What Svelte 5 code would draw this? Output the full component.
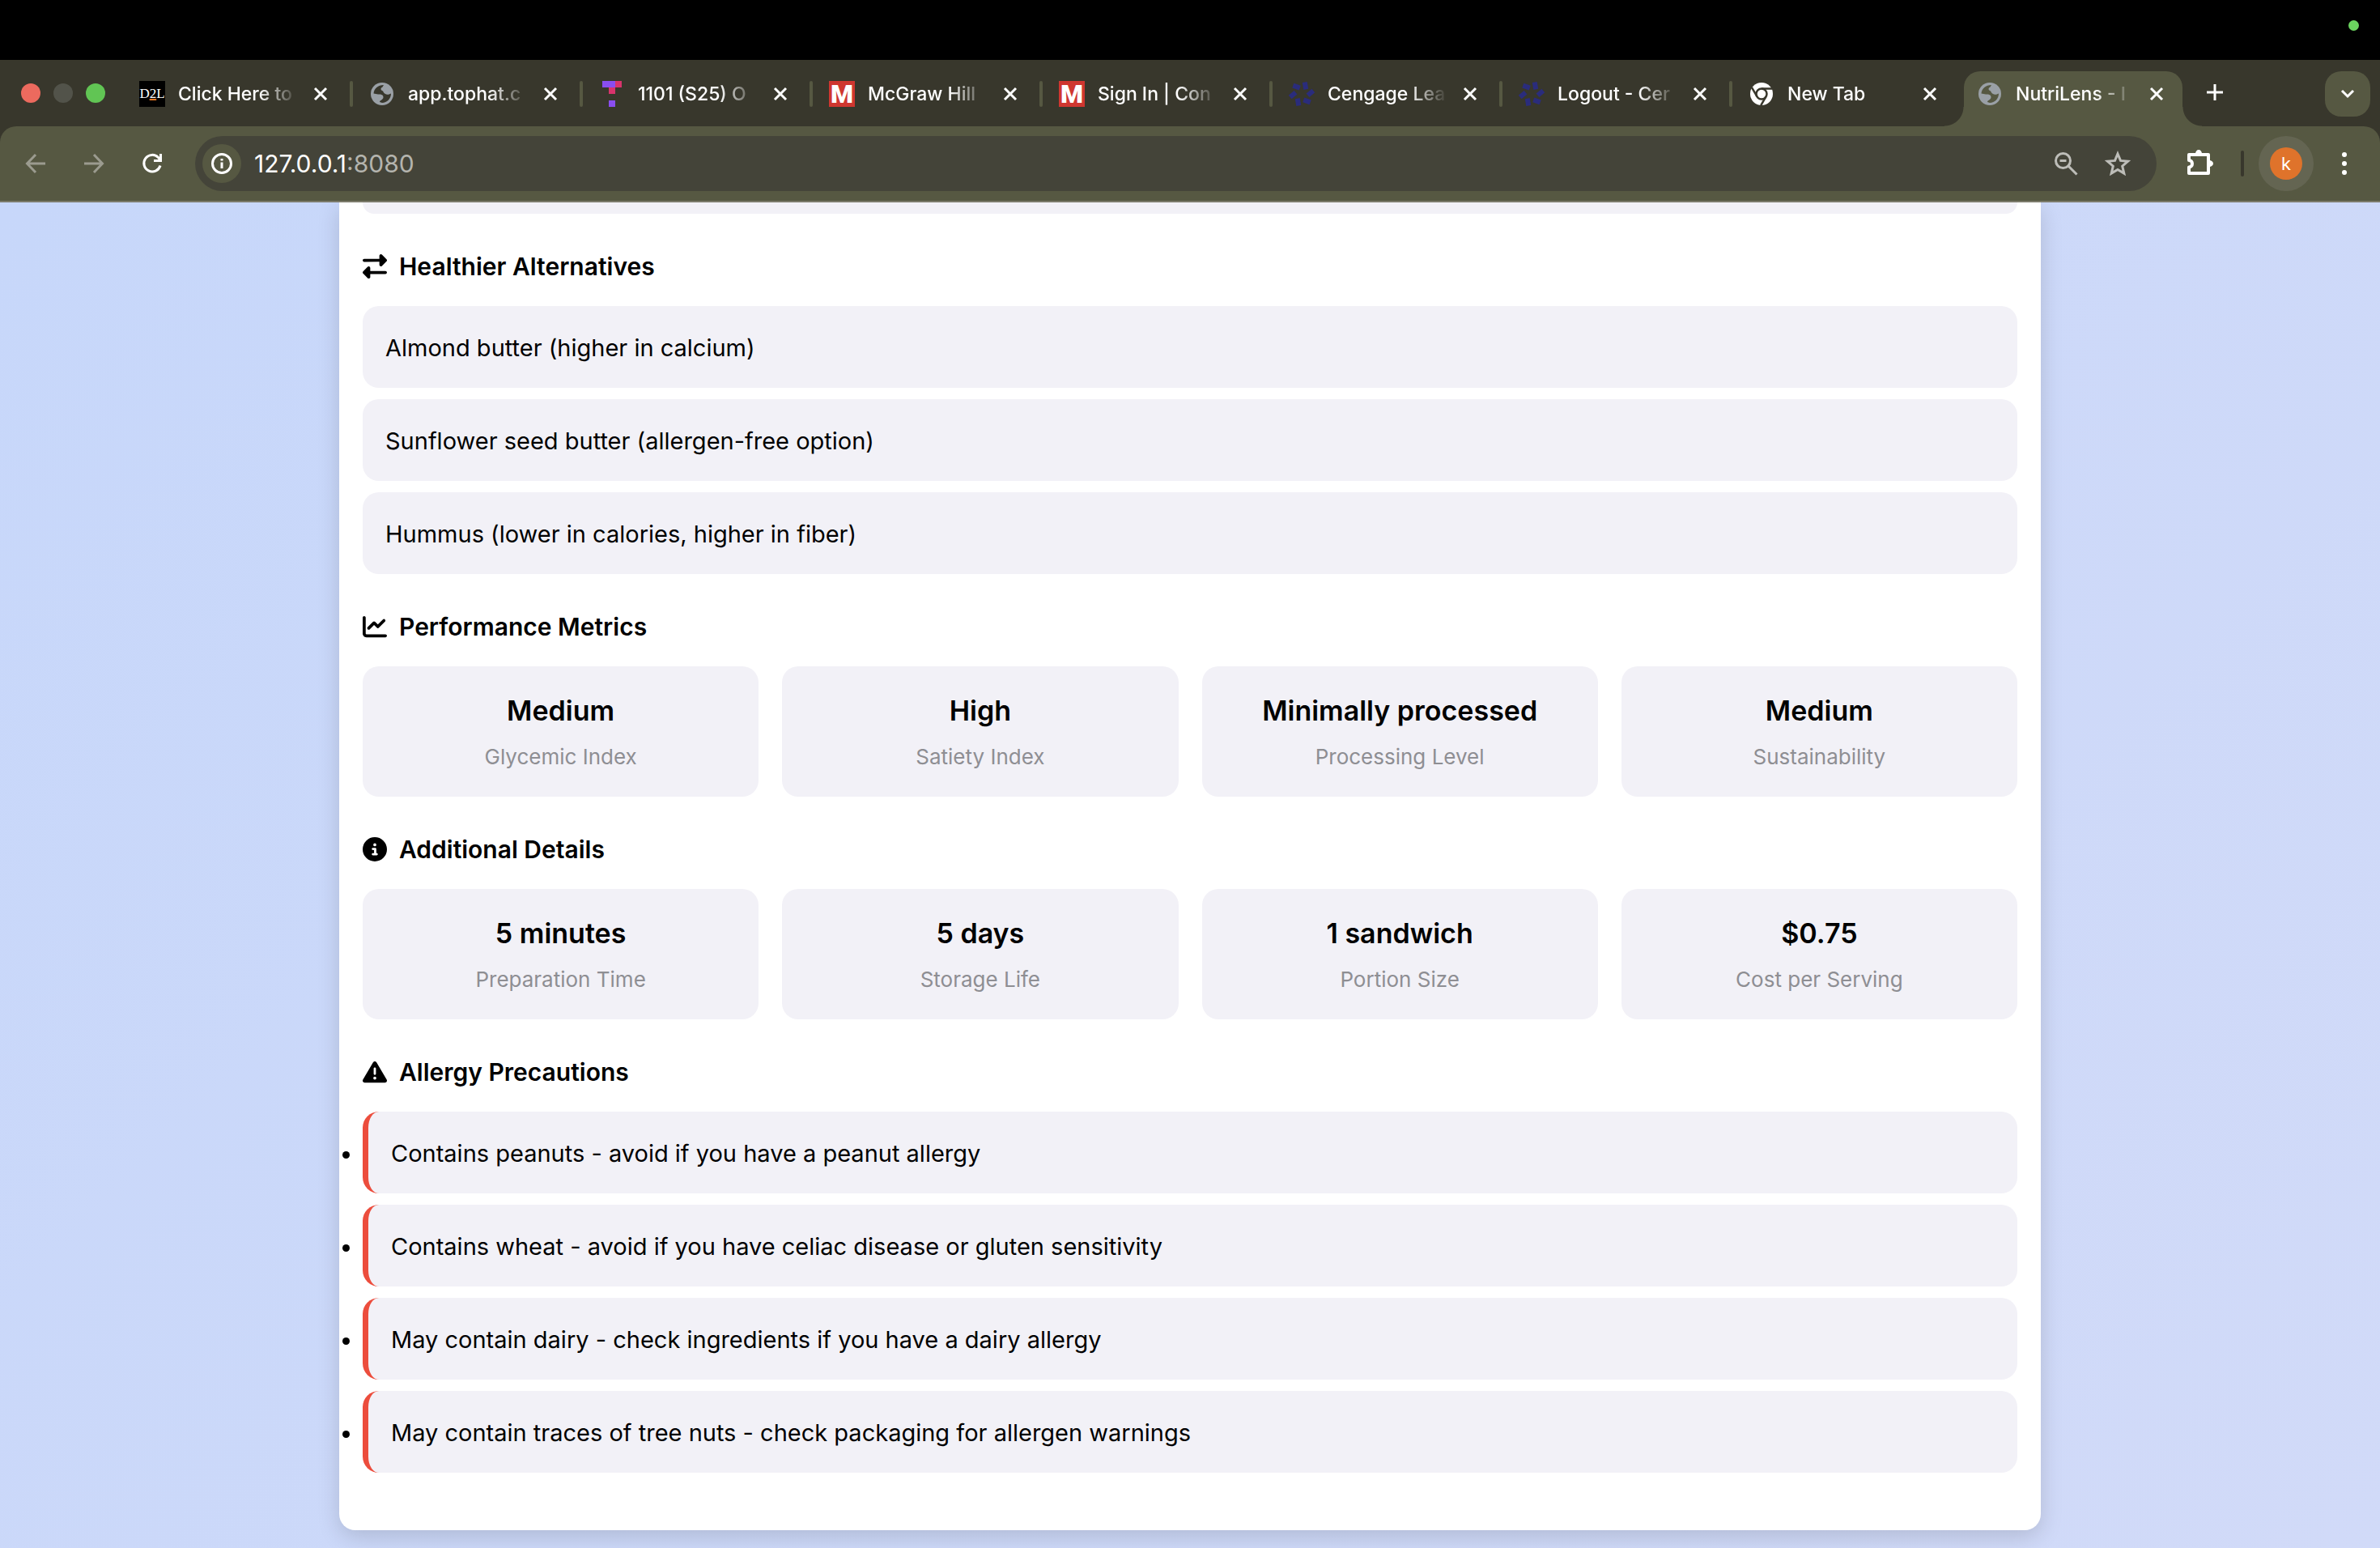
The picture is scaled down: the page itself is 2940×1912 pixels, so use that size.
<script>
  const tabs = [
    { title: 'Click Here to', icon: 'd2l' },
    { title: 'app.tophat.c', icon: 'globe' },
    { title: '1101 (S25) O', icon: 'tophat' },
    { title: 'McGraw Hill', icon: 'mh' },
    { title: 'Sign In | Con', icon: 'mh' },
    { title: 'Cengage Lea', icon: 'cengage' },
    { title: 'Logout - Cer', icon: 'cengage' },
    { title: 'New Tab', icon: 'chrome' },
    { title: 'NutriLens - I', icon: 'globe', active: true }
  ];
  const alternatives = [
    'Almond butter (higher in calcium)',
    'Sunflower seed butter (allergen-free option)',
    'Hummus (lower in calories, higher in fiber)'
  ];
  const metrics = [
    ['Medium', 'Glycemic Index'],
    ['High', 'Satiety Index'],
    ['Minimally processed', 'Processing Level'],
    ['Medium', 'Sustainability']
  ];
  const details = [
    ['5 minutes', 'Preparation Time'],
    ['5 days', 'Storage Life'],
    ['1 sandwich', 'Portion Size'],
    ['$0.75', 'Cost per Serving']
  ];
  const precautions = [
    'Contains peanuts - avoid if you have a peanut allergy',
    'Contains wheat - avoid if you have celiac disease or gluten sensitivity',
    'May contain dairy - check ingredients if you have a dairy allergy',
    'May contain traces of tree nuts - check packaging for allergen warnings'
  ];
  let url = $state('127.0.0.1:8080');
  const host = $derived(url.split(':')[0]);
  const port = $derived(url.includes(':') ? ':' + url.split(':')[1] : '');
</script>

{#snippet favicon(kind)}
  {#if kind === 'd2l'}
    <span class="fav d2l">D<u>2</u>L</span>
  {:else if kind === 'mh'}
    <span class="fav mh">M</span>
  {:else if kind === 'globe'}
    <svg class="fav" viewBox="0 0 32 32" aria-hidden="true">
      <circle cx="16" cy="16" r="14" fill="#9aa0a6" />
      <path fill="var(--tab-bg)" d="M5.500 15.500C6 9.500 11 5 18 5l-1.500 2.500C14 8.500 14 11 16 12c2 .8 1.500 3 4 4 1.500.8 3 .8 4 .8l3-1.300C27 22 22 27 16 27l-3-1c0-2.500 4.500-2.500 4.500-6 0-3-2.500-3.500-6.500-3.500z" />
    </svg>
  {:else if kind === 'tophat'}
    <svg class="fav" viewBox="0 0 32 32" aria-hidden="true">
      <path fill="#8a4df0" d="M4 0h16v8H4zM12 24h8v8h-8z" />
      <path fill="#d8336c" d="M20 0h8v8h-8zM12 8h8v8h-8z" />
    </svg>
  {:else if kind === 'cengage'}
    <svg class="fav" viewBox="0 0 32 32" aria-hidden="true">
      <g fill="#2a2c7c">
        {#each [24, 84, 144, 204, 264, 324] as a}
          <rect x="-3" y="-4.500" width="6" height="9" transform="translate(16 16) rotate({a}) translate(0 -11) rotate(-34)" />
        {/each}
      </g>
    </svg>
  {:else}
    <svg class="fav" viewBox="0 0 32 32" aria-hidden="true">
      <circle cx="16" cy="16" r="14" fill="#fff" />
      <circle cx="16" cy="16" r="6.500" fill="none" stroke="var(--tab-bg)" stroke-width="2.500" />
      <path fill="none" stroke="var(--tab-bg)" stroke-width="2.500" d="M16 9.500h13M10.400 19.200L4 8.200M21.600 19.200L15.200 30.200" />
    </svg>
  {/if}
{/snippet}

{#snippet statGrid(items)}
  <div class="grid">
    {#each items as [value, label]}
      <div class="stat">
        <div class="value">{value}</div>
        <div class="label">{label}</div>
      </div>
    {/each}
  </div>
{/snippet}

<div class="screen">
  <div class="menubar"><span class="cam"></span></div>

  <header class="tabstrip">
    <div class="lights"><span class="red"></span><span class="grey"></span><span class="green"></span></div>
    <nav class="tabs" aria-label="Tabs">
      {#each tabs as tab, i}
        <div class="tab" class:active={tab.active} class:sep={i < 7}>
          {@render favicon(tab.icon)}
          <a class="title" href="#tab-{i}">{tab.title}</a>
          <button class="close" aria-label="Close {tab.title}">
            <svg viewBox="0 0 20 20"><path d="M3 3l14 14M17 3L3 17" /></svg>
          </button>
        </div>
      {/each}
    </nav>
    <button class="plus" aria-label="New tab"><svg viewBox="0 0 20 20"><path d="M10 0v20M0 10h20" /></svg></button>
    <button class="search-tabs" aria-label="Search tabs"><svg viewBox="0 0 20 20"><path d="M3 6l7 7 7-7" /></svg></button>
  </header>

  <div class="toolbar-wrap">
    <div class="toolbar">
      <button class="nav dim" aria-label="Back"><svg viewBox="0 0 24 24"><path d="M24 12H2M12 1L1.500 12 12 23" /></svg></button>
      <button class="nav dim" aria-label="Forward"><svg viewBox="0 0 24 24"><path d="M0 12h22M12 1l10.500 11L12 23" /></svg></button>
      <button class="nav reload" aria-label="Reload"><svg viewBox="0 0 24 24"><path d="M22 14.500A10.300 10.300 0 1 1 19.500 4.500L22.500 8M22.500 0v8.500H14" /></svg></button>
      <div class="omnibox">
        <button class="info" aria-label="Site information">
          <svg viewBox="0 0 26 26"><circle cx="13" cy="13" r="11.500" /><path d="M13 11.500v7.500M13 7v2.600" /></svg>
        </button>
        <div class="url">
          <span class="shown" aria-hidden="true">{host}<i>{port}</i></span>
          <input aria-label="Address" bind:value={url} />
        </div>
        <button class="ob" aria-label="Zoom"><svg viewBox="0 0 32 32"><circle cx="12.500" cy="12.500" r="9" /><path d="M8.500 12.500h8M19 19l10.500 10.500" /></svg></button>
        <button class="ob" aria-label="Bookmark"><svg viewBox="0 0 32 32"><path d="M16 4l3.500 8.400 9.100.8-6.900 6 2.100 8.900L16 23.400l-7.800 4.700 2.100-8.900-6.900-6 9.100-.8z" /></svg></button>
      </div>
      <button class="ext" aria-label="Extensions">
        <svg viewBox="0 0 34 34">
          <path d="M4 6h24v23H4v-7.500c2.300 0 4-2 4-4.300s-1.700-4.200-4-4.200z" />
          <path class="solid" d="M12 5a4 5 0 0 1 8 0zM29 13a5 4 0 0 1 0 8z" />
        </svg>
      </button>
      <span class="divider"></span>
      <button class="avatar" aria-label="Profile"><span>k</span></button>
      <button class="more" aria-label="Menu"><span></span><span></span><span></span></button>
    </div>
  </div>

  <main class="page">
    <article class="card">
      <div class="tail"></div>

      <h3>
        <svg viewBox="0 0 512 512"><path d="M32 96l320 0 0-64c0-12.900 7.800-24.600 19.800-29.600s25.700-2.200 34.900 6.900l96 96c6 6 9.400 14.100 9.400 22.600s-3.400 16.600-9.400 22.600l-96 96c-9.200 9.200-22.900 11.900-34.900 6.900s-19.800-16.600-19.800-29.600l0-64L32 160c-17.700 0-32-14.300-32-32s14.300-32 32-32zM480 352c17.700 0 32 14.300 32 32s-14.300 32-32 32l-320 0 0 64c0 12.900-7.800 24.600-19.800 29.600s-25.700 2.200-34.900-6.900l-96-96c-6-6-9.400-14.100-9.400-22.600s3.400-16.600 9.400-22.600l96-96c9.200-9.200 22.900-11.900 34.900-6.900s19.800 16.600 19.800 29.600l0 64 320 0z" /></svg>
        Healthier Alternatives
      </h3>
      <div class="list">
        {#each alternatives as item}<div class="item">{item}</div>{/each}
      </div>

      <h3>
        <svg viewBox="0 0 512 512"><path d="M64 64c0-17.700-14.300-32-32-32S0 46.300 0 64L0 400c0 44.200 35.800 80 80 80l400 0c17.700 0 32-14.300 32-32s-14.300-32-32-32L80 416c-8.800 0-16-7.200-16-16L64 64zm406.600 86.600c12.500-12.500 12.500-32.800 0-45.300s-32.800-12.500-45.300 0L320 210.700l-57.400-57.400c-12.500-12.500-32.800-12.500-45.300 0l-112 112c-12.500 12.500-12.500 32.800 0 45.300s32.800 12.500 45.300 0L240 221.300l57.400 57.400c12.500 12.500 32.800 12.500 45.300 0l128-128z" /></svg>
        Performance Metrics
      </h3>
      {@render statGrid(metrics)}

      <h3>
        <svg viewBox="0 0 512 512"><path d="M256 512A256 256 0 1 0 256 0a256 256 0 1 0 0 512zM216 336l24 0 0-64-24 0c-13.300 0-24-10.700-24-24s10.700-24 24-24l48 0c13.300 0 24 10.700 24 24l0 88 8 0c13.300 0 24 10.700 24 24s-10.700 24-24 24l-80 0c-13.300 0-24-10.700-24-24s10.700-24 24-24zm40-208a32 32 0 1 1 0 64 32 32 0 1 1 0-64z" /></svg>
        Additional Details
      </h3>
      {@render statGrid(details)}

      <h3>
        <svg viewBox="0 0 512 512"><path d="M256 32c14.200 0 27.300 7.500 34.500 19.800l216 368c7.300 12.400 7.300 27.700 .2 40.100S486.300 480 472 480L40 480c-14.300 0-27.600-7.700-34.700-20.100s-7-27.800 .2-40.100l216-368C228.700 39.500 241.800 32 256 32zm0 128c-13.300 0-24 10.700-24 24l0 112c0 13.300 10.700 24 24 24s24-10.700 24-24l0-112c0-13.300-10.700-24-24-24zm32 224a32 32 0 1 0 -64 0 32 32 0 1 0 64 0z" /></svg>
        Allergy Precautions
      </h3>
      <ul class="list">
        {#each precautions as item}<li class="item warn">{item}</li>{/each}
      </ul>
    </article>
  </main>
</div>

<style>
  :global(body) {
    margin: 0;
    background: #000;
  }
  .screen {
    --strip: #38372c;
    --bar: #565842;
    --tab-bg: var(--strip);
    display: flex;
    flex-direction: column;
    height: 100vh;
    overflow: hidden;
    font-family: Inter, 'Liberation Sans', sans-serif;
    color: #000;
  }
  button {
    border: 0;
    padding: 0;
    background: none;
    color: #fff;
    font: inherit;
    display: flex;
    align-items: center;
    justify-content: center;
    flex: none;
  }
  svg {
    display: block;
    flex: none;
  }
  button svg {
    fill: none;
    stroke: currentColor;
    stroke-width: 3;
    overflow: visible;
  }
  .menubar {
    height: 74px;
    flex: none;
    display: flex;
    justify-content: flex-end;
    padding: 25px 26px 0 0;
    box-sizing: border-box;
    background: #000;
  }
  .cam {
    width: 13px;
    height: 13px;
    border-radius: 50%;
    background: #6bd45f;
  }

  .tabstrip {
    flex: none;
    display: flex;
    align-items: flex-start;
    height: 82px;
    padding: 14px 12px 0 26px;
    box-sizing: border-box;
    background: var(--strip);
  }
  .lights {
    display: flex;
    gap: 16px;
    padding: 15px 24px 0 0;
  }
  .lights span {
    width: 24px;
    height: 24px;
    border-radius: 50%;
  }
  .red { background: #ec6a5e; }
  .grey { background: #52534a; }
  .green { background: #61c554; }
  .tabs {
    display: flex;
    gap: 14px;
  }
  .tab {
    position: relative;
    display: flex;
    align-items: center;
    width: 270px;
    height: 68px;
    padding: 0 18px 12px;
    box-sizing: border-box;
  }
  .tab.sep::after {
    content: '';
    position: absolute;
    right: -12px;
    top: 12px;
    width: 4px;
    height: 32px;
    border-radius: 2px;
    background: var(--bar);
  }
  .tab.active {
    --tab-bg: var(--bar);
    padding: 0 22px 12px 16px;
    background: var(--bar);
    border-radius: 20px 20px 0 0;
  }
  .tab.active::before,
  .tab.active::after {
    content: '';
    position: absolute;
    bottom: 0;
    width: 24px;
    height: 24px;
  }
  .tab.active::before {
    left: -24px;
    background: radial-gradient(circle at 0 0, transparent 23px, var(--bar) 24px);
  }
  .tab.active::after {
    right: -24px;
    background: radial-gradient(circle at 100% 0, transparent 23px, var(--bar) 24px);
  }
  .fav {
    width: 32px;
    height: 32px;
    flex: none;
    overflow: hidden;
    text-align: center;
  }
  .d2l {
    background: #000;
    color: #fff;
    font: 17px/32px 'Liberation Serif', serif;
  }
  .d2l u {
    text-decoration-color: #e87722;
    text-decoration-thickness: 2px;
  }
  .mh {
    background: #cf3630;
    color: #fff;
    font: 900 32px/32px Roboto, sans-serif;
  }
  .title {
    flex: 1;
    min-width: 0;
    margin: 0 18px 0 16px;
    white-space: nowrap;
    color: #fff;
    text-decoration: none;
    font-size: 23px;
    font-weight: 500;
    line-height: 32px;
    mask-image: linear-gradient(90deg, #000 calc(100% - 48px), transparent);
  }
  .close svg,
  .plus svg,
  .search-tabs svg {
    width: 20px;
    height: 20px;
  }
  .plus {
    width: 56px;
    height: 52px;
    margin-left: 12px;
  }
  .search-tabs {
    width: 56px;
    height: 56px;
    margin-left: auto;
    border-radius: 20px;
    background: var(--bar);
  }

  .toolbar-wrap {
    flex: none;
    background: var(--strip);
  }
  .toolbar {
    display: flex;
    align-items: center;
    padding: 12px 30px;
    border-bottom: 2px solid #7c7b6b;
    border-radius: 20px 20px 0 0;
    background: var(--bar);
  }
  .nav {
    width: 28px;
    margin-right: 44px;
  }
  .nav svg {
    width: 24px;
    height: 24px;
  }
  .dim {
    color: #9b9b8f;
  }
  .reload {
    margin-right: 39px;
  }
  .omnibox {
    flex: 1;
    display: flex;
    align-items: center;
    height: 68px;
    padding: 0 32px 0 9px;
    border-radius: 34px;
    background: #444439;
  }
  .info {
    width: 48px;
    height: 48px;
    border-radius: 50%;
    background: var(--bar);
  }
  .info svg {
    width: 26px;
    height: 26px;
  }
  .url {
    position: relative;
    flex: 1;
    margin-left: 16px;
    font-size: 30px;
    line-height: 40px;
    color: #fff;
  }
  .url i {
    font-style: normal;
    color: #b4b4ae;
  }
  .url input {
    position: absolute;
    inset: 0;
    width: 100%;
    border: 0;
    padding: 0;
    background: none;
    color: transparent;
    font: inherit;
    outline: 0;
  }
  .ob {
    margin-left: 32px;
    color: #bdbdb8;
  }
  .ob svg {
    width: 32px;
    height: 32px;
  }
  .ext {
    margin-left: 36px;
  }
  .ext svg {
    width: 34px;
    height: 34px;
    stroke-width: 4;
    stroke-linejoin: round;
  }
  .ext .solid {
    fill: currentColor;
    stroke: none;
  }
  .divider {
    width: 4px;
    height: 32px;
    margin: 0 18px 0 34px;
    border-radius: 2px;
    background: var(--strip);
  }
  .avatar {
    width: 68px;
    height: 68px;
    border-radius: 50%;
    background: #646552;
  }
  .avatar span {
    width: 40px;
    height: 40px;
    border-radius: 50%;
    background: #df732b;
    font-size: 22px;
    line-height: 40px;
  }
  .more {
    flex-direction: column;
    gap: 5px;
    width: 28px;
    margin-left: 24px;
  }
  .more span {
    width: 6px;
    height: 6px;
    border-radius: 50%;
    background: #fff;
  }

  .page {
    flex: 1;
    min-height: 0;
    overflow: hidden;
    padding: 0 419px;
    background: linear-gradient(135deg, #c7d7fa, #d1daf8);
  }
  .card {
    padding: 0 29px 71px;
    border-radius: 0 0 20px 20px;
    background: #fff;
    box-shadow: 0 8px 28px rgb(0 0 0 / 15%);
  }
  .tail {
    height: 14px;
    border-radius: 0 0 20px 20px;
    background: #f2f1f7;
  }
  h3 {
    display: flex;
    align-items: center;
    gap: 15px;
    margin: 0;
    padding: 42px 0 26px;
    font-size: 30px;
    font-weight: 600;
    line-height: 46px;
  }
  h3 svg {
    width: 30px;
    height: 30px;
    fill: #000;
  }
  .list {
    display: grid;
    gap: 14px;
    margin: 0;
    padding: 0;
  }
  .item {
    padding: 30px 28px 28px;
    border-radius: 20px;
    background: #f2f1f7;
    font-size: 29px;
    line-height: 43px;
  }
  .warn {
    border-left: 7px solid #ec4d3d;
  }
  .grid {
    display: grid;
    grid-template-columns: repeat(4, 1fr);
    gap: 29px;
  }
  .stat {
    padding: 29px;
    border-radius: 20px;
    background: #f2f1f7;
    text-align: center;
  }
  .value {
    margin-bottom: 11px;
    font-size: 34px;
    font-weight: 600;
    line-height: 52px;
  }
  .label {
    color: #8e8e93;
    font-size: 26px;
    line-height: 40px;
  }
</style>
